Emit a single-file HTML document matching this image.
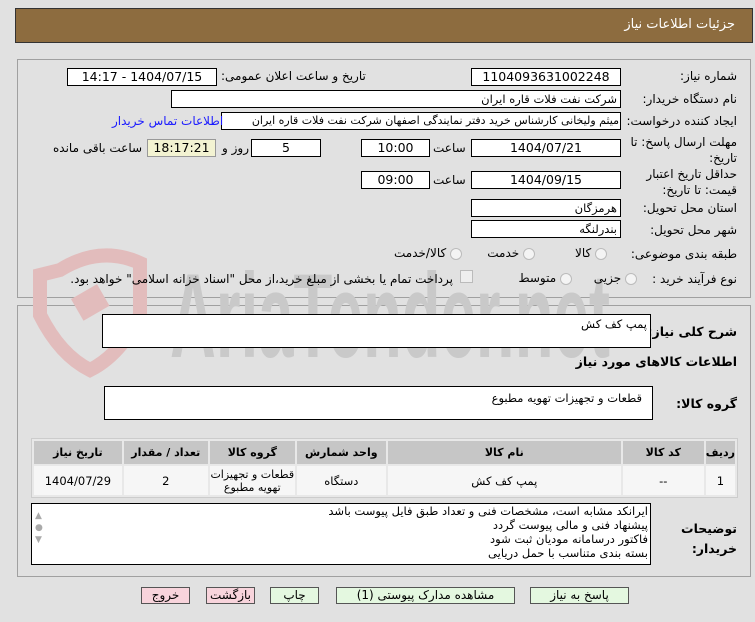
<!DOCTYPE html>
<html><head><meta charset="utf-8"><style>
*{margin:0;padding:0;box-sizing:border-box}
body{width:755px;height:622px;background:#e1e1e1;font-family:"DejaVu Sans","Liberation Sans",sans-serif;font-size:11px;color:#000;position:relative;overflow:hidden;direction:rtl}
.a{position:absolute;white-space:nowrap}
.in{position:absolute;background:#fff;border:1px solid #000;height:18px;line-height:16px;text-align:center;font-size:12.5px;overflow:hidden;white-space:nowrap}
.r{text-align:right;padding-right:3px;font-size:11.5px}
.lab{position:absolute;right:18px;font-size:12px;text-align:right;white-space:nowrap}
.panel{position:absolute;left:17px;width:734px;border:1px solid #a0a0a0}
.btn{position:absolute;top:587px;height:17px;border:1px solid #555;font-size:12px;text-align:center;line-height:15px;background:#e4f8e0}
.pk{background:#f8d4dc}
table{border-collapse:separate;border-spacing:2px;position:absolute;left:31px;top:438px;width:707px;background:#e8e8e8;border:1px solid #ccc}
th{background:#c6c6c6;height:23px;font-size:11px}
td{background:#f6f6f6;height:29px;text-align:center;font-size:11.5px}
.rad{display:inline-block;width:12px;height:12px;border:1px solid #bbb;border-radius:50%;background:#f4f4f4;vertical-align:middle}
</style></head><body>
<div class="a" style="left:15px;top:8px;width:738px;height:35px;background:#8d6c3f;border:1px solid #333"></div>
<div class="a" style="right:20px;top:17px;color:#fff;font-size:13px">جزئیات اطلاعات نیاز</div>
<div class="panel" style="top:59px;height:239px"></div>
<div class="panel" style="top:305px;height:272px"></div>
<svg class="a" style="left:20px;top:245px" width="620" height="135"><path d="M40 25 Q80 0 120 18 L120 70 Q100 110 70 125 Q40 110 20 70 L20 30 Z" fill="none" stroke="#e2bcbc" stroke-width="14"/><rect x="55" y="45" width="30" height="25" fill="#e2bcbc" transform="rotate(-30 70 57)"/><text x="150" y="112" font-size="120" textLength="440" lengthAdjust="spacingAndGlyphs" font-family="Liberation Sans" font-weight="bold" fill="#c9c9c9" style="direction:ltr">AriaTender.net</text></svg>

<div class="lab" style="top:69px">شماره نیاز:</div>
<div class="in" style="left:471px;top:68px;width:150px">1104093631002248</div>
<div class="a" style="left:221px;top:69px;font-size:12px">تاریخ و ساعت اعلان عمومی:</div>
<div class="in" style="left:67px;top:68px;width:150px">1404/07/15 - 14:17</div>
<div class="lab" style="top:92px">نام دستگاه خریدار:</div>
<div class="in r" style="left:171px;top:90px;width:450px">شرکت نفت فلات قاره ایران</div>
<div class="lab" style="top:114px">ایجاد کننده درخواست:</div>
<div class="in r" style="left:221px;top:112px;width:400px;font-size:11px;padding-right:1px">میثم ولیخانی کارشناس خرید دفتر نمایندگی اصفهان شرکت نفت فلات قاره ایران</div>
<div class="a" style="left:112px;top:114px;color:#1a1aff;font-size:12px">اطلاعات تماس خریدار</div>
<div class="lab" style="top:134px;line-height:16px">مهلت ارسال پاسخ: تا<br>تاریخ:</div>
<div class="in" style="left:471px;top:139px;width:150px">1404/07/21</div>
<div class="a" style="left:433px;top:141px;font-size:12px">ساعت</div>
<div class="in" style="left:361px;top:139px;width:69px">10:00</div>
<div class="in" style="left:251px;top:139px;width:70px">5</div>
<div class="a" style="left:222px;top:141px;font-size:12px">روز و</div>
<div class="in" style="left:147px;top:139px;width:69px;background:#f3f3d2;border-color:#999">18:17:21</div>
<div class="a" style="left:53px;top:141px;font-size:12px">ساعت باقی مانده</div>
<div class="lab" style="top:166px;line-height:16px">حداقل تاریخ اعتبار<br>قیمت: تا تاریخ:</div>
<div class="in" style="left:471px;top:171px;width:150px">1404/09/15</div>
<div class="a" style="left:433px;top:173px;font-size:12px">ساعت</div>
<div class="in" style="left:361px;top:171px;width:69px">09:00</div>
<div class="lab" style="top:201px">استان محل تحویل:</div>
<div class="in r" style="left:471px;top:199px;width:150px">هرمزگان</div>
<div class="lab" style="top:223px">شهر محل تحویل:</div>
<div class="in r" style="left:471px;top:220px;width:150px">بندرلنگه</div>
<div class="lab" style="top:247px">طبقه بندی موضوعی:</div>
<div class="a" style="right:148px;top:246px;font-size:12px"><span class="rad"></span> کالا</div>
<div class="a" style="right:220px;top:246px;font-size:12px"><span class="rad"></span> خدمت</div>
<div class="a" style="right:293px;top:246px;font-size:12px"><span class="rad"></span> کالا/خدمت</div>
<div class="lab" style="top:272px">نوع فرآیند خرید :</div>
<div class="a" style="right:118px;top:271px;font-size:12px"><span class="rad"></span> جزیی</div>
<div class="a" style="right:183px;top:271px;font-size:12px"><span class="rad"></span> متوسط</div>
<div class="a" style="right:282px;top:270px;width:13px;height:13px;border:1px solid #bbb;background:#eee"></div>
<div class="a" style="right:302px;top:272px;font-size:12px">پرداخت تمام یا بخشی از مبلغ خرید،از محل "اسناد خزانه اسلامی" خواهد بود.</div>

<div class="lab" style="top:324px;font-weight:bold;font-size:12.5px">شرح کلی نیاز:</div>
<div class="in r" style="left:102px;top:314px;width:549px;height:34px;line-height:18px">پمپ کف کش</div>
<div class="lab" style="top:354px;font-weight:bold;font-size:12.5px">اطلاعات کالاهای مورد نیاز</div>
<div class="lab" style="top:396px;font-weight:bold;font-size:12.5px">گروه کالا:</div>
<div class="in" style="left:104px;top:386px;width:549px;height:34px;text-align:right;padding-right:10px;line-height:22px;font-size:11.5px">قطعات و تجهیزات تهویه مطبوع</div>
<table><tr><th style="width:29px">ردیف</th><th style="width:81px">کد کالا</th><th style="width:233px">نام کالا</th><th style="width:89px">واحد شمارش</th><th style="width:85px">گروه کالا</th><th style="width:84px">تعداد / مقدار</th><th>تاریخ نیاز</th></tr>
<tr><td>1</td><td>--</td><td>پمپ کف کش</td><td>دستگاه</td><td style="line-height:13px;font-size:11px">قطعات و تجهیزات<br>تهویه مطبوع</td><td>2</td><td>1404/07/29</td></tr></table>
<div class="lab" style="top:519px;font-weight:bold;line-height:20px;font-size:12.5px">توضیحات<br>خریدار:</div>
<div class="in" style="left:31px;top:503px;width:620px;height:62px;text-align:right;padding-right:2px;line-height:14px;font-size:11.5px;white-space:normal">ایرانکد مشابه است، مشخصات فنی و تعداد طبق فایل پیوست باشد<br>پیشنهاد فنی و مالی پیوست گردد<br>فاکتور درسامانه مودیان ثبت شود<br>بسته بندی متناسب با حمل دریایی</div>
<div class="a" style="left:35px;top:510px;color:#aaa;font-size:9px;line-height:12px;direction:ltr">▲<br>●<br>▼</div>
<div class="btn" style="left:530px;width:99px">پاسخ به نیاز</div>
<div class="btn" style="left:336px;width:179px">مشاهده مدارک پیوستی (1)</div>
<div class="btn" style="left:270px;width:49px">چاپ</div>
<div class="btn pk" style="left:206px;width:49px">بازگشت</div>
<div class="btn pk" style="left:141px;width:49px">خروج</div>
</body></html>
